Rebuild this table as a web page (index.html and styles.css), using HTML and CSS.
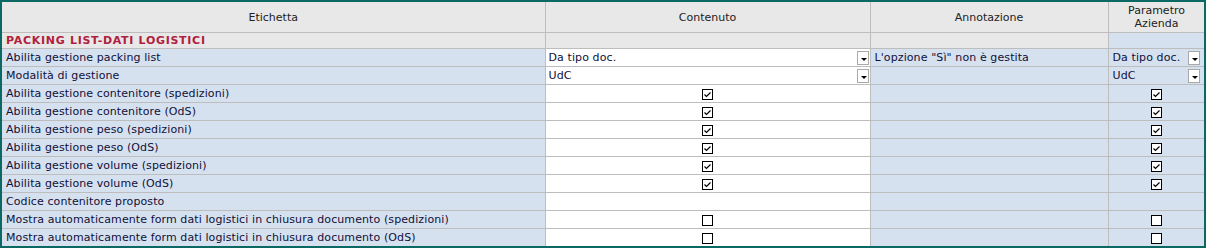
FILE: index.html
```html
<!DOCTYPE html>
<html>
<head>
    <title>Parametri documento</title>
    <link rel="stylesheet" href="styles.css">
</head>
<body>
    <div class="frame">
        <table class="grid">
            <colgroup>
                <col class="c-label">
                <col class="c-value">
                <col class="c-note">
                <col class="c-param">
            </colgroup>
            <thead>
                <tr>
                    <th>Etichetta</th>
                    <th>Contenuto</th>
                    <th>Annotazione</th>
                    <th>Parametro<br>Azienda</th>
                </tr>
            </thead>
            <tbody>
                <tr class="section">
                    <td>PACKING LIST-DATI LOGISTICI</td>
                    <td></td>
                    <td></td>
                    <td class="param"></td>
                </tr>
                <tr>
                    <td>Abilita gestione packing list</td>
                    <td class="value"><div class="combo"><span>Da tipo doc.</span><i class="drop"></i></div></td>
                    <td>L'opzione "Sì" non è gestita</td>
                    <td><div class="combo flat"><span>Da tipo doc.</span><i class="drop"></i></div></td>
                </tr>
                <tr>
                    <td>Modalità di gestione</td>
                    <td class="value"><div class="combo"><span>UdC</span><i class="drop"></i></div></td>
                    <td></td>
                    <td><div class="combo flat"><span>UdC</span><i class="drop"></i></div></td>
                </tr>
                <tr>
                    <td>Abilita gestione contenitore (spedizioni)</td>
                    <td class="value check"><svg class="box" viewBox="0 0 11 11"><rect x="0.5" y="0.5" width="10" height="10"/><path d="M2.5 5.5l2 2 4-4"/></svg></td>
                    <td></td>
                    <td class="check"><svg class="box" viewBox="0 0 11 11"><rect x="0.5" y="0.5" width="10" height="10"/><path d="M2.5 5.5l2 2 4-4"/></svg></td>
                </tr>
                <tr>
                    <td>Abilita gestione contenitore (OdS)</td>
                    <td class="value check"><svg class="box" viewBox="0 0 11 11"><rect x="0.5" y="0.5" width="10" height="10"/><path d="M2.5 5.5l2 2 4-4"/></svg></td>
                    <td></td>
                    <td class="check"><svg class="box" viewBox="0 0 11 11"><rect x="0.5" y="0.5" width="10" height="10"/><path d="M2.5 5.5l2 2 4-4"/></svg></td>
                </tr>
                <tr>
                    <td>Abilita gestione peso (spedizioni)</td>
                    <td class="value check"><svg class="box" viewBox="0 0 11 11"><rect x="0.5" y="0.5" width="10" height="10"/><path d="M2.5 5.5l2 2 4-4"/></svg></td>
                    <td></td>
                    <td class="check"><svg class="box" viewBox="0 0 11 11"><rect x="0.5" y="0.5" width="10" height="10"/><path d="M2.5 5.5l2 2 4-4"/></svg></td>
                </tr>
                <tr>
                    <td>Abilita gestione peso (OdS)</td>
                    <td class="value check"><svg class="box" viewBox="0 0 11 11"><rect x="0.5" y="0.5" width="10" height="10"/><path d="M2.5 5.5l2 2 4-4"/></svg></td>
                    <td></td>
                    <td class="check"><svg class="box" viewBox="0 0 11 11"><rect x="0.5" y="0.5" width="10" height="10"/><path d="M2.5 5.5l2 2 4-4"/></svg></td>
                </tr>
                <tr>
                    <td>Abilita gestione volume (spedizioni)</td>
                    <td class="value check"><svg class="box" viewBox="0 0 11 11"><rect x="0.5" y="0.5" width="10" height="10"/><path d="M2.5 5.5l2 2 4-4"/></svg></td>
                    <td></td>
                    <td class="check"><svg class="box" viewBox="0 0 11 11"><rect x="0.5" y="0.5" width="10" height="10"/><path d="M2.5 5.5l2 2 4-4"/></svg></td>
                </tr>
                <tr>
                    <td>Abilita gestione volume (OdS)</td>
                    <td class="value check"><svg class="box" viewBox="0 0 11 11"><rect x="0.5" y="0.5" width="10" height="10"/><path d="M2.5 5.5l2 2 4-4"/></svg></td>
                    <td></td>
                    <td class="check"><svg class="box" viewBox="0 0 11 11"><rect x="0.5" y="0.5" width="10" height="10"/><path d="M2.5 5.5l2 2 4-4"/></svg></td>
                </tr>
                <tr>
                    <td>Codice contenitore proposto</td>
                    <td class="value"></td>
                    <td></td>
                    <td></td>
                </tr>
                <tr>
                    <td>Mostra automaticamente form dati logistici in chiusura documento (spedizioni)</td>
                    <td class="value check"><svg class="box" viewBox="0 0 11 11"><rect x="0.5" y="0.5" width="10" height="10"/></svg></td>
                    <td></td>
                    <td class="check"><svg class="box" viewBox="0 0 11 11"><rect x="0.5" y="0.5" width="10" height="10"/></svg></td>
                </tr>
                <tr>
                    <td>Mostra automaticamente form dati logistici in chiusura documento (OdS)</td>
                    <td class="value check"><svg class="box" viewBox="0 0 11 11"><rect x="0.5" y="0.5" width="10" height="10"/></svg></td>
                    <td></td>
                    <td class="check"><svg class="box" viewBox="0 0 11 11"><rect x="0.5" y="0.5" width="10" height="10"/></svg></td>
                </tr>
            </tbody>
        </table>
    </div>
</body>
</html>
```

FILE: styles.css
```css
body {
    margin: 0;
    font-family: Verdana, "DejaVu Sans", sans-serif;
    font-size: 11px;
    color: #10103a;
}
.frame {
    width: 1202px;
    height: 244px;
    border: 2px solid #0b6862;
    overflow: hidden;
    background-color: #d6e1ef;
}
.grid {
    border-collapse: collapse;
    width: 1203px;
    table-layout: fixed;
}
.c-label { width: 543px; }
.c-value { width: 325px; }
.c-note { width: 238px; }
.c-param { width: 97px; }
.grid th {
    height: 30px;
    padding: 0 2px;
    background-color: #e8e8e8;
    font-weight: normal;
    color: #222;
    line-height: 13px;
    border: 1px solid #bdbdbd;
    border-top: none;
}
.grid th:first-child,
.grid td:first-child {
    border-left: none;
}
.grid td {
    height: 17px;
    padding: 0 4px;
    white-space: nowrap;
    overflow: hidden;
    border: 1px solid #bdbdbd;
    background-color: #d6e1ef;
    letter-spacing: 0.1px;
}
.grid .value {
    background-color: #fff;
    padding: 0;
}
.section td {
    height: 15px;
    background-color: #e8e8e8;
    color: #b0203c;
    font-weight: bold;
    letter-spacing: 0.7px;
}
.section td.param {
    background-color: #d6e1ef;
}
.combo {
    display: flex;
    align-items: center;
    height: 17px;
}
.combo span {
    flex: 1;
    padding-left: 3px;
}
.grid td:last-child .combo span {
    padding-left: 0;
}
.drop {
    width: 12px;
    height: 14px;
    margin-right: 1px;
    border: 1px solid #a9a9a9;
    background-color: #fff;
    box-sizing: border-box;
    position: relative;
}
.drop::after {
    content: "";
    position: absolute;
    left: 3px;
    top: 6px;
    border-left: 3px solid transparent;
    border-right: 3px solid transparent;
    border-top: 3px solid #000;
}
.grid td.check {
    text-align: center;
    padding: 0;
}
.box {
    display: inline-block;
    width: 11px;
    height: 11px;
    vertical-align: middle;
}
.box rect {
    fill: #fff;
    stroke: #000;
    stroke-width: 1;
}
.box path {
    fill: none;
    stroke: #000;
    stroke-width: 1.2;
}
```
